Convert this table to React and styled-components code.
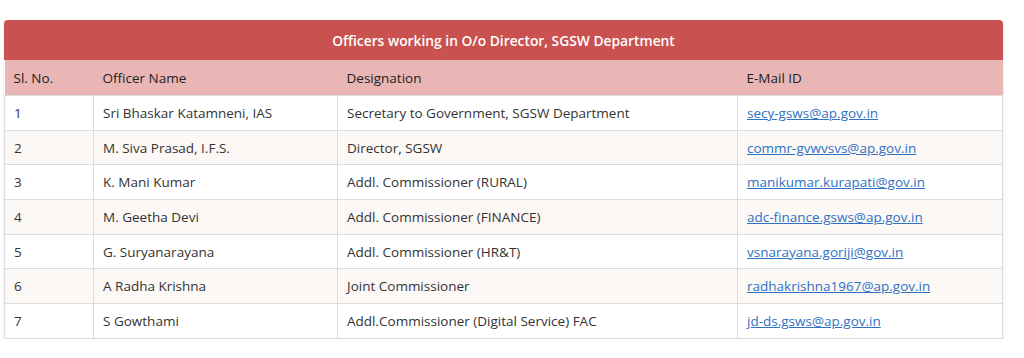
import styled, { createGlobalStyle } from "styled-components";

const officers = [
  { no: 1, name: "Sri Bhaskar Katamneni, IAS", designation: "Secretary to Government, SGSW Department", email: "secy-gsws@ap.gov.in" },
  { no: 2, name: "M. Siva Prasad, I.F.S.", designation: "Director, SGSW", email: "commr-gvwvsvs@ap.gov.in" },
  { no: 3, name: "K. Mani Kumar", designation: "Addl. Commissioner (RURAL)", email: "manikumar.kurapati@gov.in" },
  { no: 4, name: "M. Geetha Devi", designation: "Addl. Commissioner (FINANCE)", email: "adc-finance.gsws@ap.gov.in" },
  { no: 5, name: "G. Suryanarayana", designation: "Addl. Commissioner (HR&T)", email: "vsnarayana.goriji@gov.in" },
  { no: 6, name: "A Radha Krishna", designation: "Joint Commissioner", email: "radhakrishna1967@ap.gov.in" },
  { no: 7, name: "S Gowthami", designation: "Addl.Commissioner (Digital Service) FAC", email: "jd-ds.gsws@ap.gov.in" },
];

const GlobalStyle = createGlobalStyle`
  body {
    margin: 0;
    background: #ffffff;
    font-family: "Open Sans", "Noto Sans", sans-serif;
    color: #333;
  }
`;

const Page = styled.div`
  padding: 20px 21px 0 4px;
`;

const Card = styled.div`
  border-radius: 4px 4px 0 0;
  overflow: hidden;
  box-shadow: 0 1px 3px rgba(0, 0, 0, 0.12);
`;

const Title = styled.div`
  height: 40px;
  display: flex;
  align-items: center;
  justify-content: center;
  background: #c9514f;
  color: #fff;
  font-weight: 600;
  font-size: 13.8px;
`;

const Table = styled.table`
  width: 100%;
  border-collapse: collapse;
  table-layout: fixed;
  font-size: 13.5px;
`;

const Col = styled.col`
  width: ${(p) => (p.$w ? `${p.$w}px` : "auto")};
`;

const Th = styled.th`
  height: 35px;
  padding: 0 9px;
  text-align: left;
  font-weight: 400;
  color: #222;
  background: #e9b6b5;
`;

const Row = styled.tr`
  background: ${(p) => (p.$even ? "#fbf8f6" : "#ffffff")};
`;

const Td = styled.td`
  height: 33.7px;
  padding: 0 9px;
  border: 1px solid #dcdcdc;
  color: #333;
  white-space: nowrap;
`;

const Mail = styled.a`
  color: #2f72c4;
  text-decoration: underline;
`;

export default function App() {
  return (
    <>
      <GlobalStyle />
      <Page>
        <Card>
          <Title>Officers working in O/o Director, SGSW Department</Title>
          <Table>
            <colgroup>
              <Col $w={89} />
              <Col $w={244} />
              <Col $w={400} />
              <Col />
            </colgroup>
            <thead>
              <tr>
                <Th>Sl. No.</Th>
                <Th>Officer Name</Th>
                <Th>Designation</Th>
                <Th>E-Mail ID</Th>
              </tr>
            </thead>
            <tbody>
              {officers.map((o, i) => (
                <Row key={o.no} $even={i % 2 === 1}>
                  <Td>{o.no}</Td>
                  <Td>{o.name}</Td>
                  <Td>{o.designation}</Td>
                  <Td>
                    <Mail href={`mailto:${o.email}`}>{o.email}</Mail>
                  </Td>
                </Row>
              ))}
            </tbody>
          </Table>
        </Card>
      </Page>
    </>
  );
}
